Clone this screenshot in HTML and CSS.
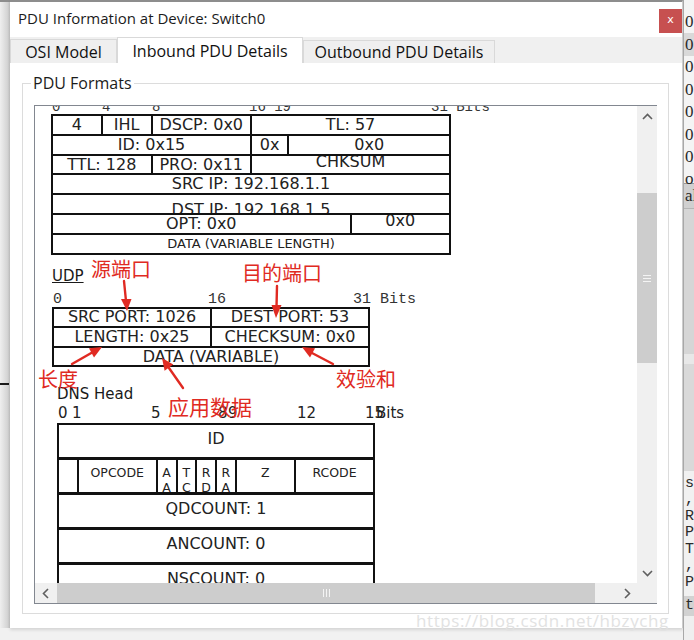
FILE: index.html
```html
<!DOCTYPE html>
<html>
<head>
<meta charset="utf-8">
<title>PDU Information at Device: Switch0</title>
<link rel="stylesheet" href="styles.css">
</head>
<body>
<div class="screen">
  <div class="shade"><div class="shade-mark"></div></div>

  <div class="dialog">
    <div class="titlebar">
      <span class="title">PDU Information at Device: Switch0</span>
      <span class="close">x</span>
    </div>
    <div class="tabs">
      <div class="tab tab-osi">OSI Model</div>
      <div class="tab tab-in">Inbound PDU Details</div>
      <div class="tab tab-out">Outbound PDU Details</div>
    </div>
    <div class="body">
      <fieldset class="group">
        <legend class="legend">PDU Formats</legend>
        <div class="panel">
          <div class="viewport">
            <div class="doc">
              <div class="ipbits">
                <span class="ib0">0</span><span class="ib4">4</span><span class="ib8">8</span><span class="ib16">16 19</span><span>31 Bits</span>
              </div>
              <div class="iptable">
                <div class="cell s4">4</div>
                <div class="cell s4">IHL</div>
                <div class="cell s8">DSCP: 0x0</div>
                <div class="cell s16">TL: 57</div>

                <div class="cell s16">ID: 0x15</div>
                <div class="cell s3">0x</div>
                <div class="cell s13">0x0</div>

                <div class="cell s8">TTL: 128</div>
                <div class="cell s8">PRO: 0x11</div>
                <div class="cell s16 up">CHKSUM</div>

                <div class="cell s32">SRC IP: 192.168.1.1</div>

                <div class="cell s32 down">DST IP: 192.168.1.5</div>

                <div class="cell s24">OPT: 0x0</div>
                <div class="cell s8 up">0x0</div>

                <div class="cell s32 small">DATA (VARIABLE LENGTH)</div>
              </div>

              <div class="udp-label"><span class="link">UDP</span></div>
              <div class="udpbits">
                <span class="ub0">0</span><span class="ub16">16</span><span>31 Bits</span>
              </div>
              <div class="udptable">
                <div class="ucell">SRC PORT: 1026</div>
                <div class="ucell">DEST PORT: 53</div>
                <div class="ucell">LENGTH: 0x25</div>
                <div class="ucell">CHECKSUM: 0x0</div>
                <div class="ucell wide">DATA (VARIABLE)</div>
              </div>

              <div class="dns-label">DNS Head</div>
              <div class="dnsbits">
                <span class="db0">0</span><span class="db1">1</span><span class="db5">5</span><span class="db8">8</span><span class="db9">9</span><span class="db12">12</span><span class="db15">15</span><span>Bits</span>
              </div>
              <div class="dnstable">
                <div class="dcell d16">ID</div>

                <div class="dcell d1 flag"></div>
                <div class="dcell d4 flag">OPCODE</div>
                <div class="dcell d1 flag">A<br>A</div>
                <div class="dcell d1 flag">T<br>C</div>
                <div class="dcell d1 flag">R<br>D</div>
                <div class="dcell d1 flag">R<br>A</div>
                <div class="dcell d3 flag">Z</div>
                <div class="dcell d4 flag">RCODE</div>

                <div class="dcell d16">QDCOUNT: 1</div>
                <div class="dcell d16">ANCOUNT: 0</div>
                <div class="dcell d16">NSCOUNT: 0</div>
                <div class="dcell d16">ARCOUNT: 0</div>
              </div>
            </div>
          </div>

          <div class="vscroll">
            <div class="arrow-btn">
              <svg width="11" height="7" viewBox="0 0 11 7"><polyline points="1,6 5.5,1.5 10,6" fill="none" stroke="#5f5f5f" stroke-width="1.6"/></svg>
            </div>
            <div class="vthumb"><span class="vgrip"></span></div>
            <div class="vfill"></div>
            <div class="arrow-btn">
              <svg width="11" height="7" viewBox="0 0 11 7"><polyline points="1,1 5.5,5.5 10,1" fill="none" stroke="#5f5f5f" stroke-width="1.6"/></svg>
            </div>
          </div>

          <div class="hscroll">
            <div class="arrow-btn">
              <svg width="7" height="11" viewBox="0 0 7 11"><polyline points="6,1 1.5,5.5 6,10" fill="none" stroke="#5f5f5f" stroke-width="1.6"/></svg>
            </div>
            <div class="hthumb"><span class="hgrip"></span></div>
            <div class="hfill"></div>
            <div class="arrow-btn">
              <svg width="7" height="11" viewBox="0 0 7 11"><polyline points="1,1 5.5,5.5 1,10" fill="none" stroke="#5f5f5f" stroke-width="1.6"/></svg>
            </div>
          </div>
          <div class="corner"></div>
        </div>
      </fieldset>
    </div>
  </div>

  <div class="bgapp">
    <div class="bl l-a"></div>
    <div class="bl l-b">0</div>
    <div class="bl l-c">0</div>
    <div class="bl l-d">0.</div>
    <div class="bl l-d">0.</div>
    <div class="bl l-d">0·</div>
    <div class="bl l-d">0·</div>
    <div class="bl l-d">0·</div>
    <div class="bl l-i">o</div>
    <div class="bl l-j">al</div>
    <div class="bl l-k"></div>
    <div class="bl l-l"></div>
    <div class="bl l-m"></div>
    <div class="bl l-n">
      <span>st</span><span>,</span><span>R</span><span>P</span><span>T</span><span>,</span><span>P</span>
    </div>
    <div class="bl l-o">t</div>
    <div class="bl l-p"></div>
  </div>

  <div class="notes">
    <span class="note n-src">源端口</span>
    <span class="note n-dst">目的端口</span>
    <span class="note n-len">长度</span>
    <span class="note n-chk">效验和</span>
    <span class="note n-app">应用数据</span>
    <svg class="arrows" width="694" height="640" viewBox="0 0 694 640">
      <g stroke="#e02a22" stroke-width="2.4" stroke-linecap="round" fill="none">
        <line x1="124" y1="281" x2="126" y2="301"/>
        <line x1="277" y1="286" x2="276.5" y2="307"/>
        <line x1="72" y1="364" x2="93" y2="352"/>
        <line x1="333" y1="364" x2="312" y2="353"/>
        <line x1="183" y1="388" x2="169" y2="368"/>
      </g>
      <g fill="#e02a22">
        <polygon points="121,299 131.5,299 127,311"/>
        <polygon points="271.5,305 281.5,305 276,318"/>
        <polygon points="94,357.5 89,348.3 102,347"/>
        <polygon points="315,348.3 310,357.5 302,347"/>
        <polygon points="173.3,364.6 164.6,370.8 162,358"/>
      </g>
    </svg>
  </div>

  <div class="watermark">https://blog.csdn.net/hbzychg</div>
</div>
</body>
</html>
```

FILE: styles.css
```css
html, body {
  margin: 0;
  padding: 0;
  background: #f2f2f2;
}

.screen {
  position: relative;
  width: 694px;
  height: 640px;
  overflow: hidden;
  display: flex;
  align-items: flex-start;
  background: #f1f1f1;
  font-family: "Open Sans", "Noto Sans", sans-serif;
}

/* left backdrop shadow */
.shade {
  width: 10px;
  height: 628px;
  flex: none;
  box-sizing: border-box;
  border-top: 2px solid #8d8d8d;
  background: linear-gradient(to right, #efefef, #d2d2d2 80%, #c4c4c4);
}
.shade-mark {
  margin-top: 381px;
  width: 9px;
  height: 2px;
  background: #1a1a1a;
}

/* dialog window */
.dialog {
  width: 673px;
  height: 628px;
  flex: none;
  box-sizing: border-box;
  border-top: 2px solid #8d8d8d;
  border-right: 1px solid #cdcdcd;
  background: #ffffff;
  display: flex;
  flex-direction: column;
  box-shadow: 0 2px 3px rgba(0, 0, 0, 0.12);
}

.titlebar {
  height: 35px;
  flex: none;
  display: flex;
  justify-content: space-between;
  align-items: flex-start;
  background: #ffffff;
}
.title {
  margin: 6px 0 0 8px;
  font-size: 15px;
  line-height: 20px;
  color: #1b1b1b;
}
.close {
  margin-top: 7px;
  width: 23px;
  height: 24px;
  background: #c75050;
  color: #ffffff;
  font-family: "DejaVu Sans", sans-serif;
  font-size: 11px;
  line-height: 22px;
  text-align: center;
}

/* tabs */
.tabs {
  height: 26px;
  flex: none;
  display: flex;
  align-items: flex-end;
  background: #f0f0f0;
}
.tab {
  box-sizing: border-box;
  display: flex;
  align-items: center;
  justify-content: center;
  border: 1px solid #d9d9d9;
  border-bottom: none;
  font-size: 16px;
  line-height: 20px;
  color: #111;
  background: #efefef;
}
.tab-osi { width: 107px; height: 24px; }
.tab-in { width: 186px; height: 26px; background: #ffffff; }
.tab-out { width: 192px; height: 23px; }

/* tab page body */
.body {
  flex: 1;
  background: #ffffff;
  padding: 0 13px 0 12px;
}

.group {
  margin: 14px 0 0 0;
  padding: 0;
  border: 1px solid #dcdcdc;
  min-width: 0;
}
.legend {
  margin-left: 8px;
  padding: 0 2px;
  font-size: 16px;
  line-height: 12px;
  color: #1b1b1b;
}

.panel {
  margin: 16px 11px 9px 11px;
  border: 1px solid #828790;
  display: grid;
  grid-template-columns: 602px 20px;
  grid-template-rows: 477px 20px;
}

.viewport {
  overflow: hidden;
  background: #ffffff;
}

.doc {
  margin-top: -6px;
  padding-left: 16px;
  color: #222;
  font-family: "DejaVu Sans", "Verdana", sans-serif;
}

/* bit rulers */
.ipbits {
  display: flex;
  height: 14px;
  font-family: "Liberation Mono", monospace;
  font-size: 14px;
  line-height: 14px;
  color: #333;
  white-space: pre;
}
.ipbits span, .udpbits span, .dnsbits span { flex: none; white-space: pre; }
.ib0 { width: 51px; text-indent: 1px; }
.ib4 { width: 50px; }
.ib8 { width: 97px; }
.ib16 { width: 182px; }

/* IP header */
.iptable {
  width: 400px;
  box-sizing: border-box;
  display: grid;
  grid-template-columns: repeat(32, 1fr);
  grid-auto-rows: 17.8px;
  gap: 2px;
  padding: 2px;
  background: #111;
}
.cell {
  background: #ffffff;
  display: flex;
  align-items: center;
  justify-content: center;
  overflow: hidden;
  white-space: nowrap;
  font-size: 16px;
  line-height: 18px;
  color: #222;
}
.s3 { grid-column: span 3; }
.s4 { grid-column: span 4; }
.s8 { grid-column: span 8; }
.s13 { grid-column: span 13; }
.s16 { grid-column: span 16; }
.s24 { grid-column: span 24; }
.s32 { grid-column: span 32; }
.cell.up { padding-bottom: 6px; }
.cell.down { padding-top: 12px; }
.cell.small { font-size: 13px; }

/* UDP */
.udp-label {
  margin: 12px 0 0 1px;
  font-size: 15px;
  line-height: 18px;
  color: #1a1a1a;
}
.link { text-decoration: underline; }

.udpbits {
  display: flex;
  margin: 8px 0 0 1px;
  height: 14px;
  font-family: "Liberation Mono", monospace;
  font-size: 15px;
  line-height: 14px;
  color: #333;
}
.ub0 { width: 156px; text-indent: 1px; }
.ub16 { width: 145px; }

.udptable {
  margin-left: 1px;
  width: 318px;
  box-sizing: border-box;
  display: grid;
  grid-template-columns: 1fr 1fr;
  grid-auto-rows: 17.6px;
  gap: 2px;
  padding: 2px;
  background: #111;
}
.ucell {
  background: #ffffff;
  display: flex;
  align-items: center;
  justify-content: center;
  white-space: nowrap;
  font-size: 16px;
  line-height: 18px;
  color: #222;
}
.ucell.wide { grid-column: span 2; }

/* DNS */
.dns-label {
  margin: 18px 0 0 6px;
  font-size: 15px;
  line-height: 18px;
  color: #1a1a1a;
}
.dnsbits {
  display: flex;
  margin: 1px 0 0 6px;
  height: 18px;
  font-size: 15px;
  line-height: 18px;
  color: #222;
}
.db0 { width: 15px; text-indent: 1px; }
.db1 { width: 79px; }
.db5 { width: 67px; }
.db8 { width: 10px; }
.db9 { width: 69px; }
.db12 { width: 68px; }
.db15 { width: 11px; }

.dnstable {
  margin: 1px 0 0 6px;
  width: 318px;
  box-sizing: border-box;
  display: grid;
  grid-template-columns: repeat(16, 1fr);
  grid-auto-rows: 32px;
  column-gap: 2px;
  row-gap: 3px;
  padding: 2px;
  background: #111;
}
.dcell {
  background: #ffffff;
  text-align: center;
  padding-top: 5px;
  overflow: hidden;
  white-space: nowrap;
  font-size: 16px;
  line-height: 18px;
  color: #222;
}
.dcell.flag {
  padding-top: 5px;
  font-size: 12.5px;
  line-height: 15px;
}
.d1 { grid-column: span 1; }
.d3 { grid-column: span 3; }
.d4 { grid-column: span 4; }
.d16 { grid-column: span 16; }

/* scrollbars */
.vscroll {
  background: #f0f0f0;
  display: flex;
  flex-direction: column;
}
.arrow-btn {
  width: 20px;
  height: 20px;
  flex: none;
  display: flex;
  align-items: center;
  justify-content: center;
}
.vthumb {
  margin-top: 67px;
  height: 170px;
  flex: none;
  background: #cdcdcd;
  display: flex;
  align-items: center;
  justify-content: center;
}
.vgrip {
  width: 8px;
  height: 7px;
  background: repeating-linear-gradient(to bottom, #f4f4f4 0 1px, #cdcdcd 1px 3px);
}
.vfill { flex: 1; }

.hscroll {
  background: #f0f0f0;
  display: flex;
}
.hthumb {
  margin-left: 2px;
  width: 538px;
  flex: none;
  background: #cdcdcd;
  display: flex;
  align-items: center;
  justify-content: center;
}
.hgrip {
  width: 7px;
  height: 8px;
  background: repeating-linear-gradient(to right, #f4f4f4 0 1px, #cdcdcd 1px 3px);
}
.hfill { flex: 1; }
.corner { background: #f0f0f0; }

/* background application strip at right */
.bgapp {
  width: 11px;
  height: 640px;
  flex: none;
  box-sizing: border-box;
  border-left: 1px solid #a8a8a8;
  display: flex;
  flex-direction: column;
  overflow: hidden;
  font-family: "Liberation Serif", serif;
  font-size: 17px;
  color: #2a2a2a;
  white-space: nowrap;
}
.bl { flex: none; padding-left: 1px; }
.l-a { height: 11px; background: #f4f4f4; }
.l-b { height: 22px; line-height: 22px; background: #f4f4f4; }
.l-c { height: 23px; line-height: 23px; background: #d9d9d9; }
.l-d { height: 22.5px; line-height: 22.5px; background: #f4f4f4; }
.l-i { height: 14px; line-height: 20px; background: #f4f4f4; border-bottom: 1px solid #9a9a9a; }
.l-j { height: 24px; line-height: 24px; background: #d0d0d0; border-bottom: 1px solid #b5b5b5; }
.l-k { height: 145px; background: #d6d6d6; }
.l-l { height: 10px; background: #e8e8e8; }
.l-m { height: 107px; background: #d9d9d9; }
.l-n {
  height: 125px;
  background: #f1f1f1;
  display: flex;
  flex-direction: column;
  padding-top: 5px;
  box-sizing: border-box;
  font-family: "Liberation Mono", monospace;
  font-size: 15px;
  line-height: 16.5px;
}
.l-o { height: 20px; line-height: 20px; background: #d2d2d2; font-family: "Liberation Mono", monospace; font-size: 15px; }
.l-p { height: 30px; background: #efefef; }

/* red annotations drawn on top of the screenshot */
.notes {
  position: absolute;
  inset: 0;
  pointer-events: none;
}
.note {
  position: absolute;
  font-family: "Noto Sans CJK SC", "Noto Sans", sans-serif;
  font-size: 20px;
  line-height: 20px;
  color: #e02a22;
  white-space: nowrap;
}
.n-src { left: 91px; top: 259px; }
.n-dst { left: 242px; top: 263px; }
.n-len { left: 38px; top: 369px; }
.n-chk { left: 336px; top: 369px; }
.n-app { left: 168px; top: 396px; font-size: 21px; line-height: 21px; }
.arrows {
  position: absolute;
  left: 0;
  top: 0;
}

.watermark {
  position: absolute;
  left: 416px;
  top: 609px;
  font-family: "Open Sans", sans-serif;
  font-size: 17px;
  letter-spacing: 0.6px;
  color: #e2e2e2;
  white-space: nowrap;
  pointer-events: none;
}
```
